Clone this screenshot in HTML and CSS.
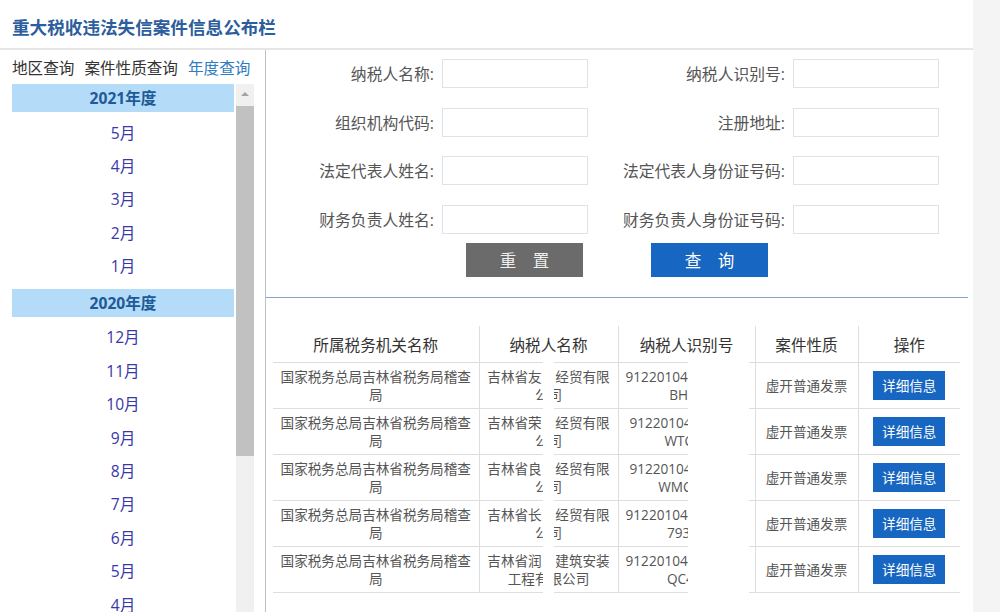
FILE: index.html
```html
<!DOCTYPE html>
<html lang="zh-CN">
<head>
<meta charset="utf-8">
<title>重大税收违法失信案件信息公布栏</title>
<link rel="stylesheet" href="styles.css">
</head>
<body>
<div class="page">
  <div class="site">
    <header class="top">
      <h1 class="title">重大税收违法失信案件信息公布栏</h1>
    </header>
    <div class="content">
      <aside class="side">
        <nav class="tabs">
          <span class="tab">地区查询</span>
          <span class="tab">案件性质查询</span>
          <span class="tab active">年度查询</span>
        </nav>
        <div class="years">
          <div class="year-list">
            <div class="year">2021年度</div>
            <ul class="months">
              <li>5月</li><li>4月</li><li>3月</li><li>2月</li><li>1月</li>
            </ul>
            <div class="year">2020年度</div>
            <ul class="months">
              <li>12月</li><li>11月</li><li>10月</li><li>9月</li><li>8月</li><li>7月</li><li>6月</li><li>5月</li><li>4月</li>
            </ul>
          </div>
          <div class="scrollbar">
            <div class="sb-up"></div>
            <div class="sb-thumb"></div>
          </div>
        </div>
      </aside>
      <main class="main">
        <form class="search">
          <label class="lbl">纳税人名称:</label><input class="field" type="text">
          <label class="lbl">纳税人识别号:</label><input class="field" type="text">
          <label class="lbl">组织机构代码:</label><input class="field" type="text">
          <label class="lbl">注册地址:</label><input class="field" type="text">
          <label class="lbl">法定代表人姓名:</label><input class="field" type="text">
          <label class="lbl">法定代表人身份证号码:</label><input class="field" type="text">
          <label class="lbl">财务负责人姓名:</label><input class="field" type="text">
          <label class="lbl">财务负责人身份证号码:</label><input class="field" type="text">
        </form>
        <div class="actions">
          <button class="btn btn-reset" type="button">重&emsp;置</button>
          <button class="btn btn-query" type="button">查&emsp;询</button>
        </div>
        <div class="rule"></div>
        <div class="result">
          <table class="cases">
            <colgroup>
              <col class="c1"><col class="c2"><col class="c3"><col class="c4"><col class="c5">
            </colgroup>
            <thead>
              <tr><th>所属税务机关名称</th><th>纳税人名称</th><th>纳税人识别号</th><th>案件性质</th><th>操作</th></tr>
            </thead>
            <tbody>
              <tr>
                <td>国家税务总局吉林省税务局稽查<br>局</td>
                <td>吉林省友　经贸有限<br>公司</td>
                <td class="code">91220104MA14736<br>BH27</td>
                <td>虚开普通发票</td>
                <td><span class="detail">详细信息</span></td>
              </tr>
              <tr>
                <td>国家税务总局吉林省税务局稽查<br>局</td>
                <td>吉林省荣　经贸有限<br>公司</td>
                <td class="code">91220104MA0795<br>WTC57</td>
                <td>虚开普通发票</td>
                <td><span class="detail">详细信息</span></td>
              </tr>
              <tr>
                <td>国家税务总局吉林省税务局稽查<br>局</td>
                <td>吉林省良　经贸有限<br>公司</td>
                <td class="code">91220104MA2563<br>WMC128</td>
                <td>虚开普通发票</td>
                <td><span class="detail">详细信息</span></td>
              </tr>
              <tr>
                <td>国家税务总局吉林省税务局稽查<br>局</td>
                <td>吉林省长　经贸有限<br>公司</td>
                <td class="code">91220104MA17304<br>79356</td>
                <td>虚开普通发票</td>
                <td><span class="detail">详细信息</span></td>
              </tr>
              <tr>
                <td>国家税务总局吉林省税务局稽查<br>局</td>
                <td>吉林省润　建筑安装<br>工程有限公司</td>
                <td class="code">91220104MA14819<br>QC4M</td>
                <td>虚开普通发票</td>
                <td><span class="detail">详细信息</span></td>
              </tr>
            </tbody>
          </table>
          <div class="mask mask-name"></div>
          <div class="mask mask-code"></div>
        </div>
      </main>
    </div>
  </div>
  <div class="gutter"></div>
</div>
</body>
</html>
```

FILE: styles.css
```css
html, body {
  margin: 0;
  padding: 0;
  overflow: hidden;
}

body {
  font-family: "Open Sans", "Noto Sans CJK SC", sans-serif;
  color: #333;
  background: #fff;
}

.page {
  display: flex;
  width: 1000px;
  height: 612px;
  overflow: hidden;
}

.site {
  width: 973px;
  display: flex;
  flex-direction: column;
}

.gutter {
  width: 27px;
  background: #f4f4f4;
}

/* header */
.top {
  height: 44px;
  padding-top: 4px;
  padding-left: 12px;
  border-bottom: 2px solid #e6e6e6;
  display: flex;
  align-items: center;
}

.title {
  margin: 0;
  font-size: 17.6px;
  font-weight: bold;
  color: #2c5d9c;
  font-family: "Noto Sans CJK SC", sans-serif;
}

.content {
  display: flex;
  flex: 1;
  min-height: 0;
}

/* sidebar */
.side {
  width: 265px;
  flex: none;
  border-right: 1px solid #b9c1c9;
}

.tabs {
  height: 34px;
  display: flex;
  align-items: center;
  gap: 10px;
  padding-left: 12px;
  font-size: 15.6px;
  color: #333;
}

.tab.active {
  color: #2f7cc0;
}

.years {
  display: flex;
  gap: 2px;
  margin-left: 12px;
}

.year-list {
  width: 222px;
}

.year {
  height: 28px;
  line-height: 28px;
  background: #b4dbf8;
  color: #1d5a97;
  font-weight: bold;
  text-align: center;
  font-size: 15.6px;
}

.months {
  list-style: none;
  margin: 4.5px 0 5.5px;
  padding: 0;
}

.months li {
  height: 33.4px;
  line-height: 33.4px;
  text-align: center;
  color: #3838a8;
  font-size: 15.6px;
}

.scrollbar {
  width: 18px;
  background: #f0f0f0;
  display: flex;
  flex-direction: column;
}

.sb-up {
  height: 20px;
  display: flex;
  align-items: center;
  justify-content: center;
}

.sb-up::before {
  content: "";
  display: block;
  width: 0;
  height: 0;
  border-left: 4px solid transparent;
  border-right: 4px solid transparent;
  border-bottom: 4px solid #a3a3a3;
}

.sb-thumb {
  margin-top: 2px;
  height: 350px;
  background: #c1c1c1;
}

/* main */
.main {
  flex: 1;
  padding-top: 9px;
}

.search {
  display: grid;
  grid-template-columns: 176px 146px 205px 146px;
  row-gap: 19.7px;
  align-items: center;
  margin: 0;
}

.lbl {
  text-align: right;
  padding-right: 8px;
  font-size: 15.8px;
  color: #555;
}

.field {
  width: 146px;
  height: 29px;
  box-sizing: border-box;
  border: 1px solid #dde3e6;
  margin: 0;
  padding: 0 4px;
  background: #fff;
}

.actions {
  display: flex;
  margin-top: 9px;
}

.btn {
  width: 117px;
  height: 34px;
  border: 0;
  padding: 0;
  color: #fff;
  font-size: 16.5px;
  font-family: "Noto Sans CJK SC", sans-serif;
}

.btn-reset {
  background: #6b6b6b;
  margin-left: 200px;
  color: #eee;
}

.btn-query {
  background: #1766c1;
  margin-left: 68px;
}

.rule {
  margin-top: 20px;
  width: 702px;
  height: 1px;
  background: #86a2c6;
}

.result {
  position: relative;
  margin: 28px 0 0 7px;
  width: 687px;
}

.cases {
  border-collapse: collapse;
  table-layout: fixed;
  width: 687px;
}

.c1 { width: 206px; }
.c2 { width: 139px; }
.c3 { width: 137px; }
.c4 { width: 103px; }
.c5 { width: 102px; }

.cases th {
  height: 36px;
  padding: 0;
  font-weight: normal;
  font-size: 15.6px;
  color: #333;
  border-left: 1px solid #dedede;
  border-bottom: 1px solid #dedede;
}

.cases td {
  height: 45px;
  padding: 0 4px;
  text-align: center;
  font-size: 13.6px;
  line-height: 18px;
  color: #555;
  border-left: 1px solid #dedede;
  border-bottom: 1px solid #dedede;
}

.cases th:first-child,
.cases td:first-child {
  border-left: 0;
}

.cases td.code {
  white-space: nowrap;
}

.detail {
  display: inline-block;
  width: 72px;
  height: 29px;
  line-height: 29px;
  background: #1766c1;
  color: #fff;
  font-size: 13.6px;
  vertical-align: middle;
}

.mask {
  position: absolute;
  background: #fff;
}

.mask-name {
  left: 270px;
  top: 32px;
  width: 11px;
  height: 237px;
}

.mask-code {
  left: 415px;
  top: 31px;
  width: 61px;
  height: 238px;
}
```
